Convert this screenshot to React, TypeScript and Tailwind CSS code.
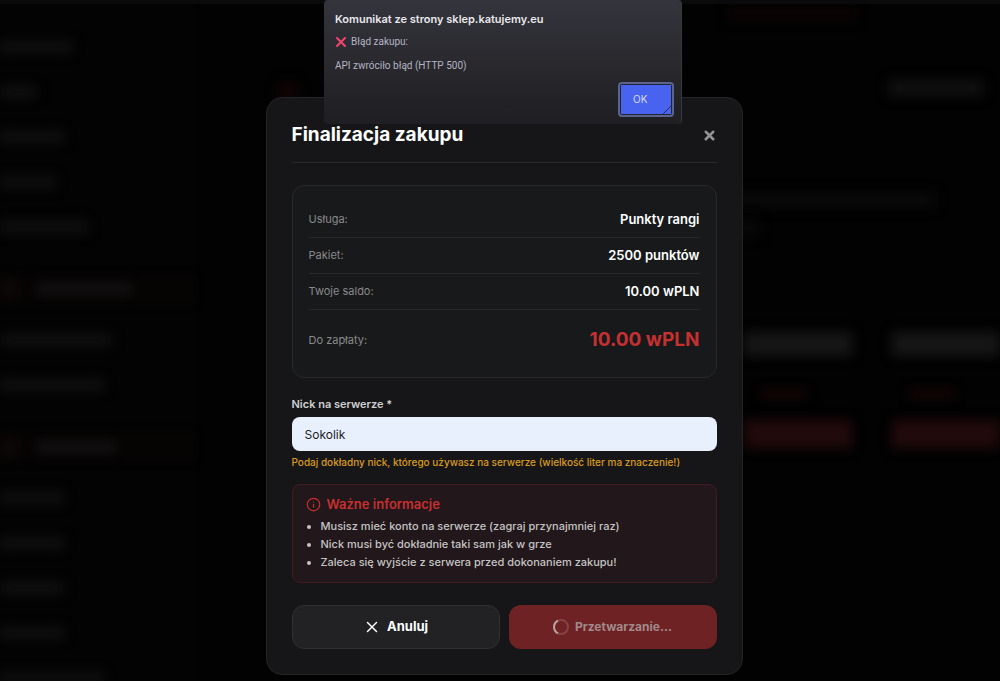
import { CircleAlert, X } from "lucide-react";

const menuGroups = [
  { heading: null, links: ["w-18", "w-9", "w-16", "w-14", "w-22"] },
  { heading: "w-24", links: ["w-28", "w-26"] },
  { heading: "w-20", links: ["w-16", "w-16", "w-16", "w-16", "w-26"] },
];

const summary = [
  { label: "Usługa:", value: "Punkty rangi" },
  { label: "Pakiet:", value: "2500 punktów" },
  { label: "Twoje saldo:", value: "10.00 wPLN" },
];

const notes = [
  "Musisz mieć konto na serwerze (zagraj przynajmniej raz)",
  "Nick musi być dokładnie taki sam jak w grze",
  "Zaleca się wyjście z serwera przed dokonaniem zakupu!",
];

function Offer() {
  return (
    <div className="flex w-27 shrink-0 flex-col">
      <div className="h-6 bg-[#161616] blur-[6px]" />
      <div className="mt-8 ml-4 h-3 w-12 bg-[#110404] blur-[5px]" />
      <div className="mt-5 h-7 bg-[#220a0b] blur-[6px]" />
    </div>
  );
}

// Shop page dimmed under the modal
function Backdrop() {
  return (
    <div aria-hidden="true" className="absolute inset-0 flex flex-col overflow-hidden">
      <div className="h-1 shrink-0 bg-[#0a0a0d]" />
      <div className="flex min-h-0 flex-1">
        <div className="flex w-49 shrink-0 flex-col bg-[#030303] pt-5">
          {menuGroups.map((group, i) => (
            <div key={i} className="flex shrink-0 flex-col pb-6">
              {group.heading && (
                <div className="mb-3 flex h-8 items-center gap-4 bg-[#060303] blur-[3px]">
                  <div className="size-5 bg-[#0c0807] blur-[5px]" />
                  <div className={`h-3 bg-[#121111] blur-[5px] ${group.heading}`} />
                </div>
              )}
              {group.links.map((width, j) => (
                <div key={j} className="flex h-[45px] items-center">
                  <div className={`h-3 bg-[#101010] blur-[6px] ${width}`} />
                </div>
              ))}
            </div>
          ))}
        </div>
        <div className="flex min-w-0 flex-1 flex-col items-end overflow-hidden">
          <div className="mr-36 h-4 w-32 bg-[#0b0303] blur-[6px]" />
          <div className="mt-15 flex w-full justify-between pr-4 pl-20">
            <div className="size-6 rounded-full bg-[#100404] blur-[6px]" />
            <div className="h-4 w-24 bg-[#101010] blur-[6px]" />
          </div>
          <div className="mt-22 mr-16 h-4 w-64 bg-[#090909] blur-[6px]" />
          <div className="mt-3 mr-60 h-4 w-64 bg-[#080808] blur-[6px]" />
          <div className="mt-24 flex gap-10">
            <Offer />
            <Offer />
          </div>
        </div>
      </div>
    </div>
  );
}

function BrowserAlert() {
  return (
    <div
      role="alertdialog"
      aria-label="Komunikat ze strony"
      className="absolute top-0 left-1/2 z-20 ml-[3px] flex h-31 w-[358px] -translate-x-1/2 flex-col rounded-sm border-r border-[#38383f] bg-linear-to-b from-[#34343d] via-[#29292e] to-[#1f1e22] pt-[11px] pr-[7px] pb-[7px] pl-[11px]"
    >
      <h2 className="text-[11px] leading-4 font-semibold text-[#e8e8ec]">Komunikat ze strony sklep.katujemy.eu</h2>
      <p className="mt-[7px] flex items-center gap-1 font-[Roboto,sans-serif] text-[10px] leading-4 text-[#b4b4c3]">
        <svg viewBox="0 0 12 12" className="size-3" fill="none" stroke="#f4456f" strokeWidth="2" strokeLinecap="round">
          <path d="M2 2l8 8M10 2l-8 8" />
        </svg>
        Błąd zakupu:
      </p>
      <p className="mt-2 font-[Roboto,sans-serif] text-[10px] leading-4 text-[#b4b4c3]">API zwróciło błąd (HTTP 500)</p>
      <button
        type="button"
        className="mt-auto flex h-[35px] w-14 items-center self-end rounded border-2 border-[#5b6391] bg-[#22242f] p-px"
      >
        <span className="relative flex h-full w-full items-center bg-[#4763f0] pl-3 text-[10px] text-[#d5dcff]">
          OK
          <svg viewBox="0 0 8 8" className="absolute right-0 bottom-0 size-2" fill="none" stroke="#252c5c">
            <path d="M0 8L8 0" />
          </svg>
        </span>
      </button>
    </div>
  );
}

function PurchaseModal() {
  return (
    <div
      role="dialog"
      aria-labelledby="modal-title"
      className="w-full max-w-[477px] rounded-2xl border border-[#242426] bg-[#161618] px-[25px] pt-[23px] pb-[25px]"
    >
      <div className="flex items-center justify-between border-b border-[#28282a] pb-[13px]">
        <h1 id="modal-title" className="text-[19px] leading-7 font-bold text-white">Finalizacja zakupu</h1>
        <button type="button" aria-label="Zamknij" className="text-[#949494]">
          <X size={15} strokeWidth={4} />
        </button>
      </div>

      <dl className="mt-[22px] rounded-xl border border-[#28292b] bg-[#18191b] p-4 pb-[23px]">
        {summary.map((row) => (
          <div key={row.label} className="flex h-9 items-center justify-between border-b border-[#28292b]">
            <dt className="text-[11px] text-[#8a8a8a]">{row.label}</dt>
            <dd className="text-[13px] font-semibold text-white">{row.value}</dd>
          </div>
        ))}
        <div className="flex items-center justify-between pt-4">
          <dt className="text-[11px] text-[#8a8a8a]">Do zapłaty:</dt>
          <dd className="text-[19px] leading-7 font-bold text-[#c53030]">10.00 wPLN</dd>
        </div>
      </dl>

      <label htmlFor="nick" className="mt-[18px] block text-[11px] leading-4 font-semibold text-[#cfcfcf]">
        Nick na serwerze *
      </label>
      <input
        id="nick"
        type="text"
        defaultValue="Sokolik"
        className="mt-[5px] block h-[34px] w-full rounded-lg bg-[#e8f0fe] px-[13px] text-xs text-[#1c1c1e] outline-none"
      />
      <p className="mt-[3px] text-[10px] leading-4 font-medium text-[#d99a1c]">
        Podaj dokładny nick, którego używasz na serwerze (wielkość liter ma znaczenie!)
      </p>

      <div className="mt-[14px] rounded-lg border border-[#431b1f] bg-[#22171a] px-[13px] pt-[10px] pb-[11px]">
        <h2 className="flex items-center gap-[6px] text-[13px] leading-[18px] font-semibold text-[#c53030]">
          <CircleAlert size={15} strokeWidth={2} className="rotate-180" />
          Ważne informacje
        </h2>
        <ul className="mt-1 list-disc pl-[15px] text-[11px] leading-[18px] font-medium text-[#c4c4c4]">
          {notes.map((note) => (
            <li key={note}>{note}</li>
          ))}
        </ul>
      </div>

      <div className="mt-[22px] grid grid-cols-2 gap-[9px]">
        <button
          type="button"
          className="flex h-11 items-center justify-center gap-[6px] rounded-xl border border-[#303032] bg-[#222224] text-[13px] font-bold text-white"
        >
          <X size={18} strokeWidth={2} />
          Anuluj
        </button>
        <button
          type="button"
          disabled
          className="flex h-11 items-center justify-center gap-[6px] rounded-xl bg-[#6f2224] text-xs font-bold text-[#a18a8b]"
        >
          <svg viewBox="0 0 16 16" className="size-4" fill="none" strokeWidth="2">
            <circle cx="8" cy="8" r="7" stroke="#874244" />
            <path d="M5 14.300A7 7 0 0 1 5 1.700" stroke="#b5a3a4" />
          </svg>
          Przetwarzanie...
        </button>
      </div>
    </div>
  );
}

export default function App() {
  return (
    <div className="relative min-h-screen overflow-hidden bg-[#020202] font-['Inter',sans-serif]">
      <Backdrop />
      <div className="relative flex items-start justify-center pt-[97px] pb-1 pl-2">
        <PurchaseModal />
      </div>
      <BrowserAlert />
    </div>
  );
}
